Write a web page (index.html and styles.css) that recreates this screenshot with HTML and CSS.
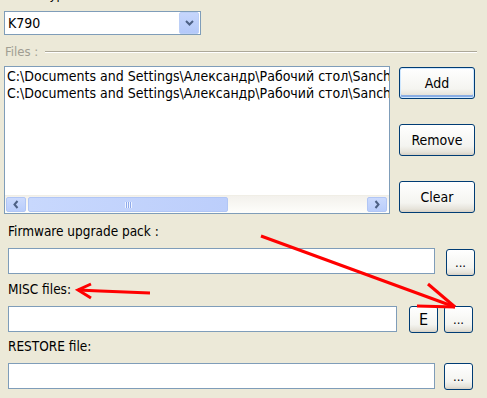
FILE: index.html
```html
<!DOCTYPE html>
<html lang="en">
<head>
    <meta charset="UTF-8">
    <title>Firmware update</title>
    <link rel="stylesheet" href="styles.css">
</head>
<body>
    <div class="window">
        <div class="caption">Phone type :</div>
        <div class="combo">
            <span class="combo-value">K790</span>
            <span class="combo-btn">
                <svg width="9" height="6" viewBox="0 0 9 6"><path d="M1 1 L4.5 4.5 L8 1" fill="none" stroke="#4d6185" stroke-width="2"/></svg>
            </span>
        </div>

        <div class="group-title"><span>Files :</span><span class="rule"></span></div>

        <div class="files">
            <div class="listbox">
                <div class="items">
                    <div class="item">C:\Documents and Settings\Александр\Рабочий стол\Sanchez\K790\K790_R8BA024.zip</div>
                    <div class="item">C:\Documents and Settings\Александр\Рабочий стол\Sanchez\K790\K790_R8BA024_FS.zip</div>
                </div>
                <div class="hscroll">
                    <span class="sb-btn">
                        <svg width="6" height="9" viewBox="0 0 6 9"><path d="M4.5 1 L1.5 4.5 L4.5 8" fill="none" stroke="#4d6185" stroke-width="2"/></svg>
                    </span>
                    <span class="track"><span class="thumb"><span class="grip"></span></span></span>
                    <span class="sb-btn">
                        <svg width="6" height="9" viewBox="0 0 6 9"><path d="M1.5 1 L4.5 4.5 L1.5 8" fill="none" stroke="#4d6185" stroke-width="2"/></svg>
                    </span>
                </div>
            </div>
            <div class="file-buttons">
                <button class="btn big default">Add</button>
                <button class="btn big">Remove</button>
                <button class="btn big">Clear</button>
            </div>
        </div>

        <div class="field first">
            <label>Firmware upgrade pack :</label>
            <div class="field-row">
                <input class="path wide" type="text">
                <button class="btn small far">...</button>
            </div>
        </div>
        <div class="field">
            <label>MISC files:</label>
            <div class="field-row">
                <input class="path narrow" type="text">
                <button class="btn small e">E</button>
                <button class="btn small">...</button>
            </div>
        </div>
        <div class="field">
            <label>RESTORE file:</label>
            <div class="field-row">
                <input class="path wide" type="text">
                <button class="btn small">...</button>
            </div>
        </div>
        <div class="field last">
            <label>Flash options:</label>
        </div>
    </div>

    <svg class="marks" width="487" height="398" viewBox="0 0 487 398">
        <g fill="none" stroke="#ff0000" stroke-width="3">
            <path d="M261 236 L455 307"/>
            <path d="M428 284 L455 307"/>
            <path d="M417 306 L455 307"/>
            <path d="M150 293 L100 291 L78 290"/>
            <path d="M91 284 L78 290 L91 298"/>
        </g>
    </svg>
</body>
</html>
```

FILE: styles.css
```css
body {
    margin: 0;
    background: #ece9d8;
    font-family: "DejaVu Sans", sans-serif;
    font-stretch: condensed;
    font-size: 13px;
    color: #000;
    width: 487px;
    height: 398px;
    overflow: hidden;
    position: relative;
}
.window {
    padding-left: 4px;
}
.caption {
    line-height: 15px;
    margin-top: -13px;
    padding-left: 1px;
}
.combo {
    display: flex;
    align-items: center;
    margin-top: 9px;
    width: 195px;
    height: 22px;
    background: #fff;
    border: 1px solid #7f9db9;
}
.combo-value {
    flex: 1;
    padding-left: 3px;
    font-size: 14px;
}
.combo-btn {
    display: flex;
    align-items: center;
    justify-content: center;
    width: 18px;
    height: 20px;
    margin-right: 1px;
    background: linear-gradient(#c6d6fc, #b4c9f9);
    border: 1px solid #bccff7;
    border-radius: 2px;
}
.group-title {
    display: flex;
    align-items: center;
    margin-top: 9px;
    line-height: 15px;
    color: #a09d92;
    padding-left: 1px;
    width: 472px;
}
.group-title .rule {
    flex: 1;
    margin-left: 7px;
    border-top: 1px solid #aca899;
    border-bottom: 1px solid #fff;
}
.files {
    display: flex;
    margin-top: 7px;
}
.listbox {
    width: 384px;
    height: 146px;
    background: #fff;
    border: 1px solid #7f9db9;
    display: flex;
    flex-direction: column;
    overflow: hidden;
}
.items {
    flex: 1;
    padding: 1px 0 0 2px;
    font-size: 14px;
    white-space: nowrap;
    overflow: hidden;
}
.item {
    line-height: 17px;
    overflow: hidden;
}
.hscroll {
    display: flex;
    align-items: center;
    height: 17px;
    padding: 0 2px 0 1px;
    background: linear-gradient(#f3f1ec, #fefefb);
    border-top: 1px solid #f0eee6;
}
.sb-btn {
    display: flex;
    align-items: center;
    justify-content: center;
    width: 18px;
    height: 13px;
    background: linear-gradient(#cbdafd, #b9cdfb);
    border: 1px solid #b1c6f5;
    border-radius: 2px;
}
.track {
    flex: 1;
    display: flex;
    padding-left: 2px;
}
.thumb {
    display: flex;
    align-items: center;
    justify-content: center;
    width: 198px;
    height: 13px;
    background: linear-gradient(90deg, #c8d8fd, #bccefb);
    border: 1px solid #b1c6f5;
    border-radius: 2px;
}
.grip {
    width: 7px;
    height: 6px;
    background: repeating-linear-gradient(90deg, #eef3ff 0 1px, #8faaeb 1px 2px);
}
.file-buttons {
    display: flex;
    flex-direction: column;
    gap: 25px;
    margin: 1px 0 0 9px;
}
.btn {
    font: inherit;
    color: #000;
    padding: 0;
    background: linear-gradient(#ffffff, #f4f4f0 70%, #e6e3da 90%, #d6d0c5);
    border: 1px solid #003c74;
    border-radius: 3px;
}
.btn.big {
    width: 76px;
    height: 32px;
    font-size: 14px;
}
.btn.default {
    box-shadow: inset 0 0 0 1px #cee7ff, inset 0 -2px 0 1px #89ade4;
}
.btn.small {
    width: 29px;
    height: 27px;
    font-size: 13px;
}
.field {
    margin-top: 6px;
    padding-left: 4px;
}
.field.first {
    margin-top: 10px;
}
.field.last {
    margin-top: 9px;
}
.field label {
    display: block;
    line-height: 15px;
    font-size: 13.5px;
}
.field-row {
    display: flex;
    align-items: flex-start;
    gap: 9px;
    margin-top: 9px;
}
.field-row .btn.far {
    margin-left: 2px;
    margin-top: 1px;
}
.field-row .btn.e {
    font-size: 16px;
    margin-left: 3px;
    margin-right: -3px;
}
.path {
    box-sizing: border-box;
    height: 26px;
    margin: 0;
    border: 1px solid #7f9db9;
    background: #fff;
}
.path.wide {
    width: 427px;
}
.path.narrow {
    width: 389px;
}
.marks {
    position: absolute;
    left: 0;
    top: 0;
}
```
